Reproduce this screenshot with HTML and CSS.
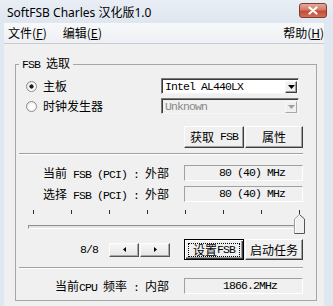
FILE: index.html
```html
<!DOCTYPE html>
<html>
<head>
<meta charset="utf-8">
<link rel="stylesheet" href="styles.css">
</head>
<body>
<div class="titlebar">
  <span class="title">SoftFSB Charles 汉化版1.0</span>
  <span class="close"><svg width="12" height="9" viewBox="0 0 12 9"><path d="M2.5 1.5 L9.5 7.5 M9.5 1.5 L2.5 7.5" stroke="#fff" stroke-width="2.2" stroke-linecap="round"/></svg></span>
</div>
<div class="client">
  <div class="menubar">
    <span class="mi">文件(<u>F</u>)</span>
    <span class="mi">编辑(<u>E</u>)</span>
    <span class="mi right">帮助(<u>H</u>)</span>
  </div>
  <fieldset class="group">
    <legend><span class="m">FSB </span>选取</legend>
    <div class="top">
      <div class="radio"><span class="rb on"></span>主板</div>
      <div class="combo"><span class="val m">Intel AL440LX</span><span class="drop"><svg width="7" height="4" viewBox="0 0 7 4"><path d="M0 0 H7 L3.5 4 Z" fill="#000"/></svg></span></div>
      <div class="radio"><span class="rb"></span>时钟发生器</div>
      <div class="combo dis"><span class="val m">Unknown</span><span class="drop"><svg width="7" height="4" viewBox="0 0 7 4"><path d="M0 0 H7 L3.5 4 Z" fill="#a0a0a0"/></svg></span></div>
    </div>
    <div class="btnrow first">
      <div class="btn w1">获取<span class="m"> FSB</span></div>
      <div class="btn w2">属性</div>
    </div>
    <div class="sep"></div>
    <div class="info">
      <span class="lbl">当前<span class="m"> FSB (PCI) : </span>外部</span>
      <span class="field m p1">80 (40) MHz</span>
      <span class="lbl">选择<span class="m"> FSB (PCI) : </span>外部</span>
      <span class="field m p1">80 (40) MHz</span>
    </div>
    <div class="slider">
      <div class="ticks"><i></i><i></i><i></i><i></i><i></i><i></i><i></i><i></i></div>
      <div class="track"></div>
      <svg class="thumb" width="11" height="20" viewBox="0 0 11 20">
        <path d="M0.5 19.5 V5 L5.5 0.5 L10.5 5 V19.5 Z" fill="#f0f0f0"/>
        <path d="M0.5 19.5 V5 L5.5 0.5" fill="none" stroke="#a0a0a0"/>
        <path d="M1.5 19 V5.4 L5.5 1.8" fill="none" stroke="#fff"/>
        <path d="M5.5 0.5 L10.5 5 V19.5 H0.5" fill="none" stroke="#555"/>
      </svg>
    </div>
    <div class="row3">
      <span class="pos m">8/8</span>
      <div class="spin">
        <div class="sb"><svg width="3" height="5" viewBox="0 0 3 5"><path d="M3 0 V5 L0 2.5 Z" fill="#000"/></svg></div>
        <div class="sb"><svg width="3" height="5" viewBox="0 0 3 5"><path d="M0 0 V5 L3 2.5 Z" fill="#000"/></svg></div>
      </div>
      <div class="btnrow">
        <div class="btn w1 focus"><span class="fr">设置<span class="m">FSB</span></span></div>
        <div class="btn w2">启动任务</div>
      </div>
    </div>
    <div class="sep sep2"></div>
    <div class="info cpu">
      <span class="lbl">当前<span class="m">CPU </span>频率<span class="m"> : </span>内部</span>
      <span class="field m p2">1866.2MHz</span>
    </div>
  </fieldset>
</div>
</body>
</html>
```
FILE: styles.css
```css
* { box-sizing: border-box; }
html, body { margin: 0; padding: 0; }
body {
  width: 333px;
  height: 306px;
  overflow: hidden;
  background: #dfe7f1;
  font-family: "Noto Sans CJK SC", sans-serif;
  font-size: 12px;
  color: #000;
}
.m {
  font-family: "Liberation Mono", monospace;
  font-size: 11.5px;
  letter-spacing: -0.9px;
}
.titlebar {
  height: 23px;
  display: flex;
  align-items: flex-start;
  background: linear-gradient(#e9eef5, #dee6f0);
}
.title {
  font-family: "Noto Sans", "Noto Sans CJK SC", sans-serif;
  font-size: 12px;
  line-height: 14px;
  margin: 6px 0 0 7px;
  color: #000;
}
.close {
  margin: 3px 6px 0 auto;
  width: 28px;
  height: 15px;
  border: 1px solid #83392f;
  border-radius: 3px;
  background: linear-gradient(#e6a899, #d27b69 45%, #c34a36 55%, #d0705a);
  display: flex;
  align-items: center;
  justify-content: center;
}
.client {
  margin: 0 9px 0 4px;
  height: 283px;
  background: #f0f0f0;
}
.menubar {
  height: 21px;
  display: flex;
  align-items: center;
  padding-left: 4px;
  border-bottom: 1px solid #c8ccd2;
  background: linear-gradient(#f7f8fa, #eef0f3);
}
.mi { line-height: 14px; margin-right: 16px; }
.mi.right { margin-left: auto; margin-right: 0; }
.group {
  margin: 12px 0 0 11px;
  width: 302px;
  padding: 0 13px 6px 3px;
  border: 1px solid #a6a6a6;
  min-width: 0;
}
.group legend {
  padding: 0 3px;
  line-height: 14px;
  white-space: pre;
}
.top {
  margin-top: 6px;
  display: grid;
  grid-template-columns: 142px 138px;
  grid-template-rows: 16px 16px;
  row-gap: 4px;
}
.radio {
  display: flex;
  align-items: center;
  padding-left: 7px;
  line-height: 14px;
}
.rb {
  width: 11px;
  height: 11px;
  border-radius: 50%;
  border: 1px solid #8b8b8b;
  margin-right: 6px;
  background: radial-gradient(circle at 65% 65%, #fff 0 35%, #dcdcdc 100%);
}
.rb.on {
  background: radial-gradient(circle at 50% 50%, #1b1b1b 0 1.8px, transparent 2.4px),
              radial-gradient(circle at 65% 65%, #fff 0 35%, #dcdcdc 100%);
}
.combo {
  height: 16px;
  display: flex;
  align-items: center;
  padding-left: 3px;
  background: #fff;
  border: 1px solid;
  border-color: #7a7a7a #f4f4f4 #f4f4f4 #7a7a7a;
  box-shadow: inset 1px 1px 0 #3c3c3c;
}
.combo .val { flex: 1; line-height: 13px; }
.combo.dis { background: #f0f0f0; color: #8a8a8a; }
.drop {
  width: 12px;
  height: 12px;
  margin-right: 1px;
  margin-top: 1px;
  display: flex;
  align-items: center;
  justify-content: center;
  background: #f0f0f0;
  border: 1px solid;
  border-color: #f8f8f8 #404040 #404040 #f8f8f8;
  box-shadow: inset -1px -1px 0 #a0a0a0;
}
.combo.dis .drop { border-color: #f8f8f8 #a8a8a8 #a8a8a8 #f8f8f8; box-shadow: none; }
.btnrow {
  display: flex;
  justify-content: flex-end;
  gap: 1px;
}
.btnrow.first { margin-top: 12px; }
.btn {
  height: 22px;
  display: flex;
  align-items: center;
  justify-content: center;
  line-height: 14px;
  white-space: pre;
  background: #f0f0f0;
  border: 1px solid;
  border-color: #fdfdfd #3f3f3f #3f3f3f #fdfdfd;
  box-shadow: inset -1px -1px 0 #a0a0a0;
}
.w1 { width: 60px; }
.w2 { width: 58px; }
.btn.focus {
  border-color: #000;
  box-shadow: inset 1px 1px 0 #fdfdfd, inset -1px -1px 0 #3f3f3f, inset -2px -2px 0 #a0a0a0;
}
.fr {
  width: 52px;
  height: 14px;
  display: flex;
  align-items: center;
  justify-content: center;
  border: 1px dotted #000;
}
.sep {
  margin-top: 5px;
  height: 2px;
  border-top: 1px solid #a0a0a0;
  border-bottom: 1px solid #fff;
}
.info {
  margin-top: 10px;
  display: grid;
  grid-template-columns: 150px 119px;
  column-gap: 15px;
  row-gap: 5px;
}
.lbl {
  text-align: right;
  line-height: 16px;
  height: 16px;
  white-space: pre;
}
.field {
  height: 16px;
  line-height: 14px;
  border: 1px solid;
  border-color: #a0a0a0 #fff #fff #a0a0a0;
  white-space: pre;
}
.p1 { padding-left: 34px; }
.p2 { padding-left: 38px; }
.slider {
  position: relative;
  margin-top: 8px;
  height: 24px;
}
.ticks {
  margin-left: 14px;
  width: 267px;
  height: 4px;
  display: flex;
  justify-content: space-between;
}
.ticks i { width: 1px; height: 4px; background: #303030; }
.track {
  margin: 11px 0 0 9px;
  width: 272px;
  height: 4px;
  background: #e3e3e3;
  border: 1px solid;
  border-color: #8f8f8f #fff #fff #8f8f8f;
}
.thumb { position: absolute; left: 275px; top: 4px; }
.row3 {
  margin-top: 5px;
  height: 21px;
  display: flex;
  align-items: center;
}
.row3 .btnrow { margin-left: 14px; }
.row3 .btn { height: 21px; }
.pos { width: 79px; text-align: right; line-height: 14px; }
.spin { margin-left: 11px; display: flex; gap: 1px; }
.sb {
  width: 30px;
  height: 14px;
  display: flex;
  align-items: center;
  justify-content: center;
  background: linear-gradient(#f6f6f6, #e6e6e6);
  border: 1px solid;
  border-color: #fdfdfd #555 #555 #fdfdfd;
  box-shadow: inset -1px -1px 0 #a8a8a8;
}
.sep2 { margin-top: 7px; }
.info.cpu { margin-top: 9px; }
```
